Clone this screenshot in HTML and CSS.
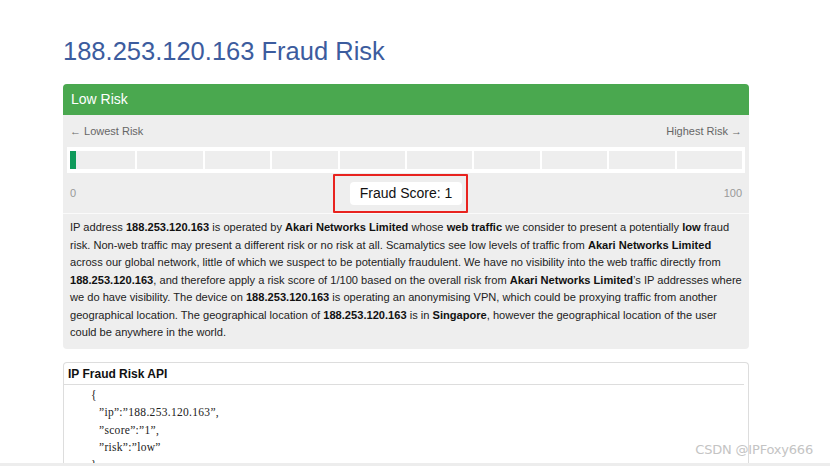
FILE: index.html
```html
<!DOCTYPE html>
<html>
<head>
<meta charset="utf-8">
<link rel="stylesheet" href="styles.css">
</head>
<body>
<div class="page">
  <h1 class="title">188.253.120.163 Fraud Risk</h1>
  <div class="panel">
    <div class="panel-head">Low Risk</div>
    <div class="meter">
      <div class="ends"><span>&larr; Lowest Risk</span><span>Highest Risk &rarr;</span></div>
      <div class="bar">
        <div class="seg"><i class="mark"></i></div><div class="seg"></div><div class="seg"></div><div class="seg"></div><div class="seg"></div><div class="seg"></div><div class="seg"></div><div class="seg"></div><div class="seg"></div><div class="seg"></div>
      </div>
      <div class="scale">
        <span class="num">0</span>
        <span class="score">Fraud Score: 1<i class="annot"></i></span>
        <span class="num right">100</span>
      </div>
    </div>
    <p class="desc">IP address <b>188.253.120.163</b> is operated by <b>Akari Networks Limited</b> whose <b>web traffic</b> we consider to present a potentially <b>low</b> fraud risk. Non-web traffic may present a different risk or no risk at all. Scamalytics see low levels of traffic from <b>Akari Networks Limited</b> across our global network, little of which we suspect to be potentially fraudulent. We have no visibility into the web traffic directly from <b>188.253.120.163</b>, and therefore apply a risk score of 1/100 based on the overall risk from <b>Akari Networks Limited</b>’s IP addresses where we do have visibility. The device on <b>188.253.120.163</b> is operating an anonymising VPN, which could be proxying traffic from another geographical location. The geographical location of <b>188.253.120.163</b> is in <b>Singapore</b>, however the geographical location of the user could be anywhere in the world.</p>
  </div>
  <div class="api">
    <div class="api-head">IP Fraud Risk API</div>
    <div class="code">
      <div class="cl">{</div>
      <div class="cl in">”ip”:”188.253.120.163”,</div>
      <div class="cl in">”score”:”1”,</div>
      <div class="cl in">”risk”:”low”</div>
      <div class="cl">}</div>
    </div>
  </div>
</div>
<div class="watermark">CSDN @IPFoxy666</div>
<div class="strip"></div>
</body>
</html>
```
FILE: styles.css
```css
html, body { margin: 0; padding: 0; background: #fff; overflow: hidden; height: 466px; }
body { font-family: "Liberation Sans", Arial, sans-serif; color: #222; }
.page { width: 686px; margin-left: 63px; }
.title { margin: 0; padding-top: 36px; font-size: 25.5px; line-height: 30px; font-weight: normal; color: #3c5c9e; height: 48px; }
.panel { background: #eeeeee; border-radius: 4px; overflow: hidden; }
.panel-head { background: #4aa84f; color: #fff; font-size: 14px; height: 31px; line-height: 31px; padding: 0 8px; }
.meter { padding: 8px 4px 0 4px; border-bottom: 1px solid #fafafa; }
.ends { display: flex; justify-content: space-between; font-size: 11px; line-height: 16px; color: #666; padding: 0 3px; }
.bar { margin-top: 8px; background: #fff; height: 26px; box-sizing: border-box; padding: 4px 3px 4px 3px; display: flex; gap: 2px; }
.seg { flex: 1; background: #eeeeee; position: relative; }
.mark { position: absolute; left: 0; top: 0; bottom: 0; width: 6px; background: #0e9a5a; }
.scale { display: grid; grid-template-columns: 1fr auto 1fr; align-items: center; height: 40px; padding: 0 3px; }
.num { font-size: 11px; color: #999; }
.num.right { text-align: right; }
.score { position: relative; background: #fff; border-radius: 4px; font-size: 14px; height: 23px; line-height: 23px; padding: 0 10px; color: #111; }
.annot { position: absolute; left: -17px; top: -8px; width: 135px; height: 39px; box-sizing: border-box; border: 2px solid #e8231f; border-radius: 1px; }
.desc { margin: 0; padding: 5px 5px 7px 7px; font-size: 11.1px; line-height: 17.5px; color: #222; }
.desc b { color: #111; }
.api { margin-top: 13px; border: 1px solid #dddddd; border-bottom: none; border-radius: 4px 4px 0 0; height: 120px; }
.api-head { font-size: 12px; font-weight: bold; height: 21px; line-height: 23px; padding-left: 4px; border-bottom: 1px solid #dddddd; margin-right: 4px; color: #111; }
.code { padding: 2px 0 0 27px; font-family: "Liberation Serif", "Times New Roman", serif; font-size: 11.5px; line-height: 17.5px; color: #222; letter-spacing: 0.3px; }
.cl.in { padding-left: 8px; }
.watermark { position: absolute; right: 17px; top: 442px; font-size: 13px; color: #c4c4c4; font-family: "DejaVu Sans", sans-serif; letter-spacing: -0.2px; }
.strip { position: absolute; left: 0; right: 0; top: 463px; height: 3px; background: #ededed; }
```
